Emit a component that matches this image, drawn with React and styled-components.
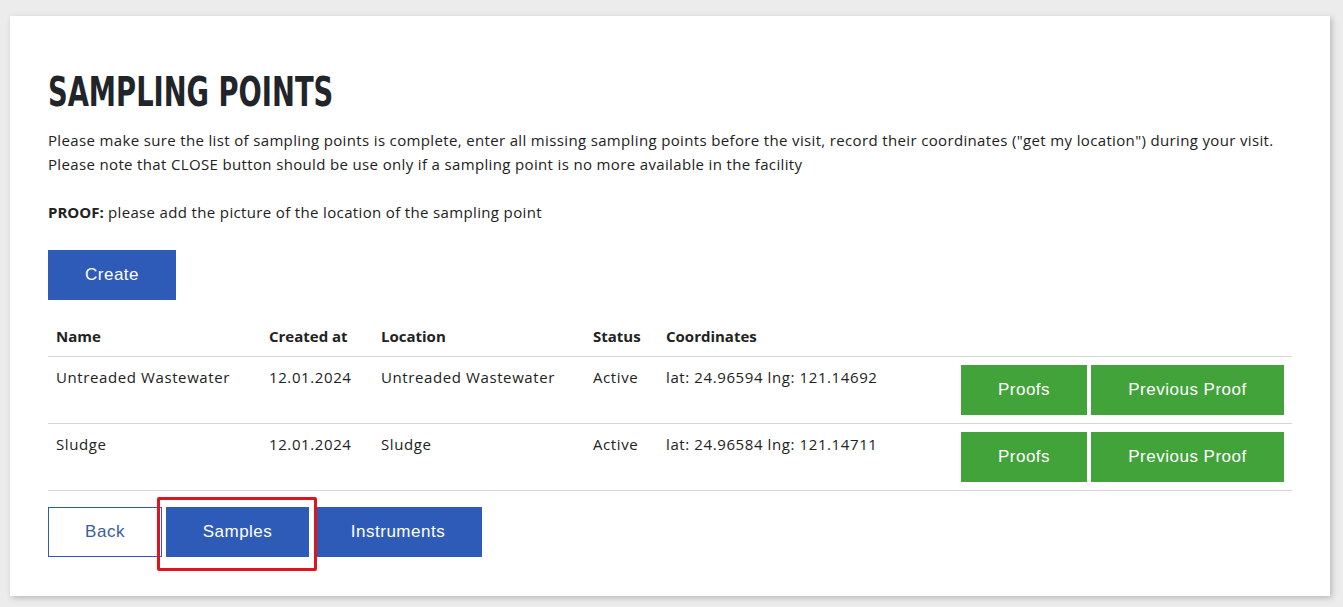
import React from 'react';
import styled, { createGlobalStyle } from 'styled-components';

const GlobalStyle = createGlobalStyle`
  html, body {
    margin: 0;
    padding: 0;
    background: #ececec;
  }
  body {
    font-family: "Open Sans", "Liberation Sans", sans-serif;
    color: #222;
  }
`;

const Page = styled.div`
  padding: 16px 13px 12px 10px;
`;

const Card = styled.div`
  background: #fff;
  box-shadow: 2px 2px 6px rgba(0, 0, 0, 0.22);
  padding: 52px 38px 39px 38px;
  min-height: 488px;
`;

const Title = styled.h1`
  margin: 0 0 12px;
  font-family: "DejaVu Sans", sans-serif;
  font-stretch: condensed;
  font-weight: 700;
  font-size: 40px;
  line-height: 48px;
  color: #212529;
  letter-spacing: 0;
  transform: scaleX(0.76);
  transform-origin: left center;
`;

const Text = styled.p`
  margin: 0;
  font-size: 15px;
  line-height: 24px;
  letter-spacing: 0.35px;
  color: #222;

  b {
    letter-spacing: 0;
  }
`;

const BlueButton = styled.button`
  height: 50px;
  width: ${p => p.w}px;
  border: 1px solid #2e5bb8;
  background: ${p => (p.outline ? '#fff' : '#2e5bb8')};
  color: ${p => (p.outline ? '#3a5d9f' : '#fff')};
  font-family: "Liberation Sans", Arial, sans-serif;
  font-size: 17px;
  letter-spacing: 0.5px;
  padding: 0;
  cursor: pointer;
`;

const CreateRow = styled.div`
  margin-top: 26px;
  margin-bottom: 16px;
`;

const Table = styled.div`
  display: grid;
  grid-template-columns: 213px 112px 212px 73px 1fr auto;
  font-size: 15px;
  line-height: 24px;
`;

const HeadCell = styled.div`
  font-weight: 700;
  padding: 8px;
  border-bottom: 1px solid #d6d6d6;
`;

const Cell = styled.div`
  padding: 8px;
  min-height: 50px;
  border-bottom: 1px solid #d6d6d6;
  display: flex;
  gap: 4px;
  letter-spacing: 0.6px;
  justify-content: ${p => (p.actions ? 'flex-end' : 'flex-start')};
  align-items: flex-start;
`;

const GreenButton = styled.button`
  height: 50px;
  width: ${p => p.w}px;
  border: none;
  background: #43a33b;
  color: #fff;
  font-family: "Liberation Sans", Arial, sans-serif;
  font-size: 17px;
  letter-spacing: 0.5px;
  padding: 0;
  cursor: pointer;
`;

const Footer = styled.div`
  margin-top: 16px;
  display: flex;
  gap: 4px;
`;

const Highlight = styled.span`
  position: relative;
  display: inline-flex;
  margin-right: 1px;

  &::after {
    content: '';
    position: absolute;
    top: -10px;
    left: -9px;
    right: -8px;
    bottom: -14px;
    border: 3px solid #e0141c;
    border-radius: 2px;
    pointer-events: none;
  }
`;

const rows = [
  {
    name: 'Untreaded Wastewater',
    created: '12.01.2024',
    location: 'Untreaded Wastewater',
    status: 'Active',
    coords: 'lat: 24.96594 lng: 121.14692',
  },
  {
    name: 'Sludge',
    created: '12.01.2024',
    location: 'Sludge',
    status: 'Active',
    coords: 'lat: 24.96584 lng: 121.14711',
  },
];

const App = () => (
  <Page>
    <GlobalStyle />
    <Card>
      <Title>SAMPLING POINTS</Title>
      <Text>
        Please make sure the list of sampling points is complete, enter all missing sampling points before the visit, record their coordinates ("get my location") during your visit.
        <br />
        Please note that CLOSE button should be use only if a sampling point is no more available in the facility
      </Text>
      <Text>&nbsp;</Text>
      <Text>
        <b>PROOF:</b> please add the picture of the location of the sampling point
      </Text>
      <CreateRow>
        <BlueButton w={128}>Create</BlueButton>
      </CreateRow>
      <Table>
        <HeadCell>Name</HeadCell>
        <HeadCell>Created at</HeadCell>
        <HeadCell>Location</HeadCell>
        <HeadCell>Status</HeadCell>
        <HeadCell>Coordinates</HeadCell>
        <HeadCell />
        {rows.map(r => (
          <React.Fragment key={r.name}>
            <Cell>{r.name}</Cell>
            <Cell>{r.created}</Cell>
            <Cell>{r.location}</Cell>
            <Cell>{r.status}</Cell>
            <Cell>{r.coords}</Cell>
            <Cell actions>
              <GreenButton w={126}>Proofs</GreenButton>
              <GreenButton w={193}>Previous Proof</GreenButton>
            </Cell>
          </React.Fragment>
        ))}
      </Table>
      <Footer>
        <BlueButton outline w={114}>Back</BlueButton>
        <Highlight>
          <BlueButton w={143}>Samples</BlueButton>
        </Highlight>
        <BlueButton w={168}>Instruments</BlueButton>
      </Footer>
    </Card>
  </Page>
);

export default App;
